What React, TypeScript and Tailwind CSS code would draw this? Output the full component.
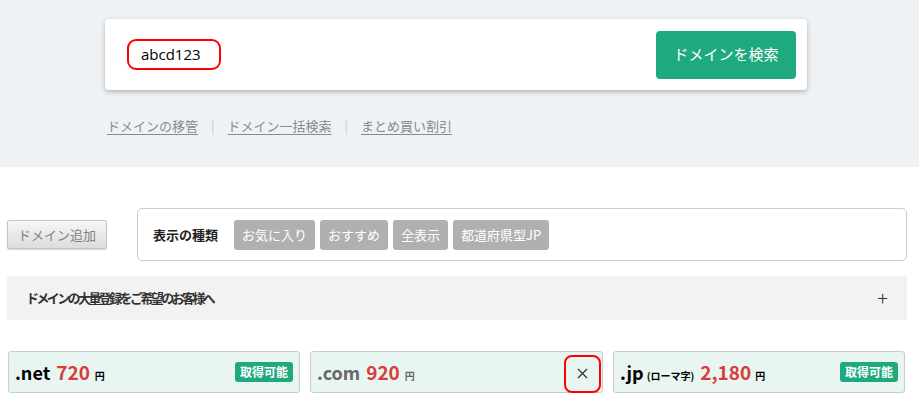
import React from 'react';

const jp = { fontFamily: '"Noto Sans CJK JP", "Noto Sans", sans-serif' };

const Badge: React.FC = () => (
    <span className="bg-[#1fa97f] text-white text-[12px] font-bold rounded-[3px] px-[5px] h-[20px] leading-[20px]">
        取得可能
    </span>
);

const App: React.FC = () => {
    const tags = ['お気に入り', 'おすすめ', '全表示', '都道府県型JP'];
    return (
        <div className="w-[919px] h-[399px] overflow-hidden bg-white" style={jp}>
            {/* search area */}
            <div className="h-[167px] bg-[#eff2f5] pt-[19px]">
                <div className="ml-[105px] w-[702px] h-[71px] bg-white rounded-[4px] shadow-[0_2px_5px_rgba(0,0,0,0.25)] flex items-center justify-between pl-[22px] pr-[11px]">
                    <div className="w-[94px] h-[31px] border-2 border-[#ff0000] rounded-[9px] flex items-center pl-[12px] text-[15px] text-black" style={{ fontFamily: '"Open Sans", sans-serif' }}>
                        abcd123
                    </div>
                    <button className="w-[140px] h-[48px] bg-[#1fa97f] rounded-[4px] text-white text-[15px]">
                        ドメインを検索
                    </button>
                </div>
                <div className="ml-[107px] mt-[26px] flex items-center text-[13px] text-[#8a8a8a]">
                    <a className="underline underline-offset-[3px]">ドメインの移管</a>
                    <span className="mx-[13px] text-[#c8c8c8]">|</span>
                    <a className="underline underline-offset-[3px]">ドメイン一括検索</a>
                    <span className="mx-[13px] text-[#c8c8c8]">|</span>
                    <a className="underline underline-offset-[3px]">まとめ買い割引</a>
                </div>
            </div>

            {/* filters */}
            <div className="pl-[7px] pr-[12px] pt-[41px]">
                <div className="flex items-center">
                    <button className="w-[100px] h-[29px] border border-[#c4c4c4] rounded-[2px] bg-gradient-to-b from-[#f7f7f7] to-[#dcdcdc] text-[13px] text-[#808080] shadow-[0_1px_1px_rgba(0,0,0,0.15)]">
                        ドメイン追加
                    </button>
                    <div className="ml-[30px] flex-1 h-[53px] border border-[#cccccc] rounded-[5px] flex items-center pl-[15px]">
                        <span className="text-[13px] font-bold text-[#222] mr-[16px]">表示の種類</span>
                        <div className="flex gap-[5px]">
                            {tags.map((t) => (
                                <span key={t} className="h-[30px] leading-[30px] px-[8px] bg-[#b0b0b0] text-white text-[13px] rounded-[3px]">
                                    {t}
                                </span>
                            ))}
                        </div>
                    </div>
                </div>

                <div className="mt-[15px] h-[44px] bg-[#f2f2f2] flex items-center justify-between pl-[19px] pr-[19px]">
                    <span className="text-[13px] font-bold text-[#333] tracking-[-2.6px]">ドメインの大量登録をご希望のお客様へ</span>
                    <span className="text-[20px] font-light text-[#333] leading-none">+</span>
                </div>

                <div className="mt-[31px] pl-[1px] flex gap-[10px]">
                    <div className="w-[292px] h-[42px] bg-[#e8f5f0] border border-[#c8cdcc] rounded-[3px] flex items-center justify-between pl-[6px] pr-[6px]">
                        <div className="flex items-baseline">
                            <span className="text-[18px] font-bold text-black">.net</span>
                            <span className="ml-[6px] text-[19px] font-bold text-[#d83c3c]">720</span>
                            <span className="ml-[5px] text-[10px] font-bold text-black">円</span>
                        </div>
                        <Badge />
                    </div>
                    <div className="w-[293px] h-[42px] bg-[#e8f5f0] border border-[#c8cdcc] rounded-[3px] flex items-center justify-between pl-[6px] pr-[1px]">
                        <div className="flex items-baseline">
                            <span className="text-[18px] font-bold text-[#666]">.com</span>
                            <span className="ml-[6px] text-[19px] font-bold text-[#d83c3c]">920</span>
                            <span className="ml-[5px] text-[10px] font-bold text-[#666]">円</span>
                        </div>
                        <div className="w-[37px] h-[38px] border-2 border-[#ff0000] rounded-[8px] flex items-center justify-center mt-[3px]">
                            <svg width="11" height="11" viewBox="0 0 11 11">
                                <path d="M1 1 L10 10 M10 1 L1 10" stroke="#333" strokeWidth="1.3" />
                            </svg>
                        </div>
                    </div>
                    <div className="w-[292px] h-[42px] bg-[#e8f5f0] border border-[#c8cdcc] rounded-[3px] flex items-center justify-between pl-[6px] pr-[6px]">
                        <div className="flex items-baseline">
                            <span className="text-[18px] font-bold text-black">.jp</span>
                            <span className="ml-[3px] text-[10px] font-bold text-black">(ローマ字)</span>
                            <span className="ml-[6px] text-[19px] font-bold text-[#d83c3c]">2,180</span>
                            <span className="ml-[4px] text-[10px] font-bold text-black">円</span>
                        </div>
                        <Badge />
                    </div>
                </div>
            </div>
        </div>
    );
};

export default App;
